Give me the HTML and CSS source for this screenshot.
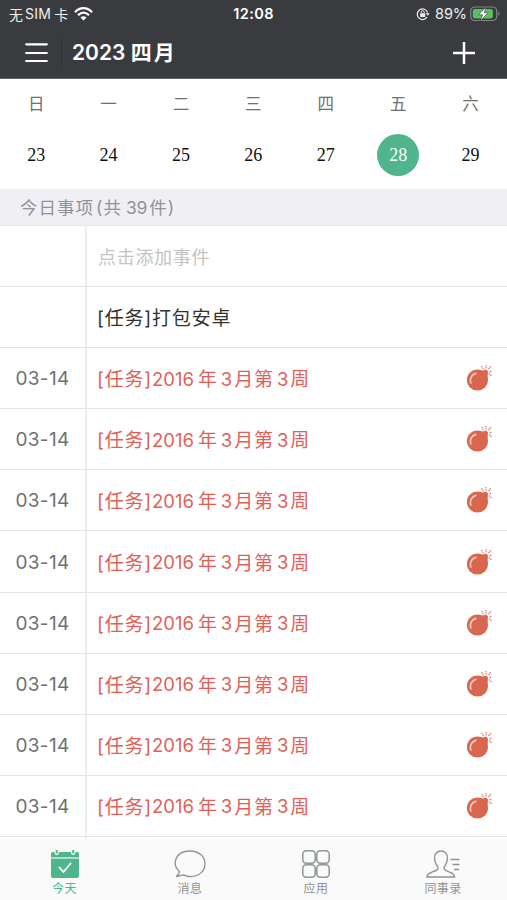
FILE: index.html
```
<!DOCTYPE html>
<html lang="zh-CN">
<head>
<meta charset="utf-8">
<title>今天</title>
<link rel="stylesheet" href="styles.css">
</head>
<body>
<svg class="defs" width="0" height="0">
  <symbol id="bomb" viewBox="0 0 28 28">
    <circle cx="12.5" cy="16" r="10.6" fill="#d9674f"/>
    <path d="M16 7l5-1.500 2 2-.5 6z" fill="#d9674f"/>
    <path d="M5.800 19c-1.400-4.500.8-8.500 5-9.600" fill="none" stroke="#f7c9b9" stroke-width="1.700" stroke-linecap="round"/>
    <path d="M18.500 5l-2-3M21 4.500V1M23.500 5l2.500-3M24.500 7.500h2.500M24 9.500l2.500 2.500" fill="none" stroke="#dd8675" stroke-width="1.300" stroke-dasharray="1.600 .6"/>
  </symbol>
</svg>
<div class="app">
  <header>
    <div class="status">
      <div class="carrier"><span>无</span><span class="sim">SIM</span><span>卡</span>
        <svg class="wifi" width="19" height="14" viewBox="0 0 19 14"><g fill="none" stroke="#fff" stroke-width="2.300"><path d="M1 5.200C6-.2 13-.2 18 5.200"/><path d="M4 8.300c3.500-3.400 7.500-3.400 11 0"/></g><path d="M9.500 13.500L6.500 10.500q3-2.400 6 0z" fill="#fff"/></svg>
      </div>
      <time>12:08</time>
      <div class="power">
        <svg width="14" height="14" viewBox="0 0 14 14"><path d="M11 10.200A5.300 5.300 0 1 1 11.600 5.500" fill="none" stroke="#eee" stroke-width="1.300"/><path d="M9.600 6.200h4L11.800 8.800z" fill="#eee"/><rect x="4.200" y="6.300" width="5" height="3.700" rx=".5" fill="#eee"/><path d="M5.200 6.500V5.200a1.500 1.500 0 0 1 3 0v1.300" fill="none" stroke="#eee"/></svg>
        <span>89%</span>
        <svg width="31" height="16" viewBox="0 0 31 16"><rect x=".7" y="1" width="26" height="13.500" rx="4" fill="none" stroke="#85868a" stroke-width="1.200"/><rect x="2.800" y="3" width="20" height="9.500" rx="2.300" fill="#58c35c"/><path d="M28.300 5.500q2.500 2.200 0 4.500z" fill="#85868a"/><path d="M16.300.8L8.500 8.800h4.200L10.200 15l8-8.300H14z" fill="#fff" stroke="#3a3b3f" stroke-width=".6"/></svg>
      </div>
    </div>
    <div class="nav">
      <svg class="menu" width="23" height="22" viewBox="0 0 23 22"><path d="M1.200 2.300h20.600M1.200 11h20.600M1.200 19h20.600" stroke="#fff" stroke-width="2.200" stroke-linecap="round"/></svg>
      <h1>2023 <span>四月</span></h1>
      <svg class="plus" width="22" height="22" viewBox="0 0 22 22"><path d="M11 .8v20.400M.8 11h20.400" stroke="#fff" stroke-width="2.500" stroke-linecap="round"/></svg>
    </div>
  </header>
  <section class="calendar">
    <div class="week"><span>日</span><span>一</span><span>二</span><span>三</span><span>四</span><span>五</span><span>六</span></div>
    <div class="days"><span>23</span><span>24</span><span>25</span><span>26</span><span>27</span><span class="active">28</span><span>29</span></div>
  </section>
  <h2>今日事项<span class="count">(共<b>39</b>件)</span></h2>
  <main id="tasks">
    <div class="row"><div class="date"></div><div class="title hint">点击添加事件</div></div>
    <div class="row"><div class="date"></div><div class="title">[任务]打包安卓</div></div>
  </main>
  <footer>
    <div class="tab on">
      <svg width="28" height="28" viewBox="0 0 28 28"><path d="M0 8.500h28V26q0 2-2 2H2q-2 0-2-2z" fill="#4fb58e"/><path d="M0 7V4q0-2 2-2h1.500q0 3 2.200 3T8 2h12q0 3 2.200 3t2.300-3H26q2 0 2 2v3z" fill="#4fb58e"/><path d="M0 7h28v1.500H0z" fill="#b5dfce"/><path d="M5.700 0v3.500M22.200 0v3.500" stroke="#4fb58e" stroke-width="2"/><path d="M8 17l4.500 5L20 13" fill="none" stroke="#fff" stroke-width="1.800"/></svg>
      <span>今天</span>
    </div>
    <div class="tab">
      <svg width="32" height="28" viewBox="0 0 32 28"><path d="M5.500 21.700C-2.500 14.500.8 1 16 1c8.500 0 15 5.400 15 12.700 0 10.500-12 15.800-21.500 11.200L2 26.500q3-1.500 3.500-4.800z" fill="none" stroke="#8f9291" stroke-width="1.300"/></svg>
      <span>消息</span>
    </div>
    <div class="tab">
      <svg width="28" height="28" viewBox="0 0 28 28"><g fill="none" stroke="#8f9897" stroke-width="1.500"><rect x=".8" y=".8" width="12.400" height="12.400" rx="3.500"/><rect x="14.800" y=".8" width="12.400" height="12.400" rx="3.500"/><rect x=".8" y="14.800" width="12.400" height="12.400" rx="3.500"/><rect x="14.800" y="14.800" width="12.400" height="12.400" rx="3.500"/></g></svg>
      <span>应用</span>
    </div>
    <div class="tab">
      <svg width="34" height="28" viewBox="0 0 34 28"><path d="M12 17.500C10.500 15 8.500 12.500 8.500 8.500 8.500 4 11 1 15 1s6.500 3 6.500 7.500c0 4-2 6.500-3.500 9-.7 2 1.500 3 5 4.300 4 1.300 5.500 2.400 5.500 5.200H1c0-2.800 1.500-3.900 5.500-5.200 4-1.300 6.200-2.300 5.500-4.300z" fill="none" stroke="#8f9291" stroke-width="1.400"/><path d="M24.500 9.500h9M26.500 14.500h7M28 19.500h5" stroke="#8f9291" stroke-width="1.500"/></svg>
      <span>同事录</span>
    </div>
  </footer>
</div>
<script src="tasks.js"></script>
</body>
</html>
```
FILE: styles.css
```
* { box-sizing: border-box; }
body { margin: 0; font-family: Inter, "Noto Sans CJK SC", sans-serif; background: #fff; }
svg { display: block; flex: none; }
.defs { position: absolute; }
.app { width: 507px; height: 900px; overflow: hidden; display: flex; flex-direction: column; }
header { height: 79px; flex: none; background: #3a3b3f; color: #fff; border-bottom: 1px solid #636467; }
.status { height: 27px; display: grid; grid-template-columns: 1fr auto 1fr; align-items: center; font-size: 14px; color: #eee; }
.carrier { display: flex; align-items: center; padding-left: 9px; }
.sim { margin: 0 3px 0 2px; letter-spacing: .3px; }
.wifi { margin-left: 6px; }
time { font-weight: 600; font-size: 14.500px; letter-spacing: .4px; color: #fff; }
.power { display: flex; justify-content: flex-end; align-items: center; padding-right: 6px; }
.power span { margin: 0 3px 0 5px; font-size: 14.500px; letter-spacing: -.1px; }
.nav { height: 51px; display: flex; align-items: center; padding: 0 32px 0 25px; }
h1 { height: 30px; line-height: 30px; margin: 0 auto 0 13px; padding-left: 10px; border-left: 1px solid #303135; font-size: 21px; font-weight: 600; white-space: nowrap; }
h1 span { letter-spacing: 2px; }
.calendar { height: 110px; flex: none; }
.week, .days { display: grid; grid-template-columns: repeat(7, 72.400px); justify-items: center; align-items: center; }
.week { height: 48px; font-size: 16.500px; color: #707070; }
.days { height: 55px; font: 18px "Liberation Serif", serif; color: #111; }
.days span { width: 42px; height: 42px; line-height: 43px; text-align: center; border-radius: 50%; }
.days .active { background: #50b48d; color: #fff; }
h2 { flex: none; height: 37px; line-height: 37px; margin: 0; padding-left: 20px; background: #efeff4; border-bottom: 1px solid #e9e9ec; color: #939397; font-size: 17.500px; font-weight: 400; letter-spacing: 1px; }
h2 b { font-weight: 400; margin: 0 2px 0 4px; letter-spacing: -.2px; }
.count { margin-left: 2px; }
main { height: 613px; flex: none; overflow: hidden; }
.row { height: 61.100px; display: flex; border-bottom: 1px solid #e4e4e6; }
.date { width: 87px; flex: none; border-right: 2px solid #ededf0; display: flex; align-items: center; justify-content: center; padding-top: 1px; font-size: 19px; letter-spacing: .3px; color: #707073; }
.title { flex: 1; display: flex; align-items: center; padding-left: 10px; padding-bottom: 1px; font-size: 19px; letter-spacing: .8px; color: #333; }
.hint { font-size: 18px; color: #c3c3c3; padding-left: 11px; letter-spacing: .7px; }
.late { color: #e25f58; }
.late b { font-weight: 400; font-size: 18.500px; letter-spacing: 0; margin: 2px 2px 0 3px; }
.late b:first-of-type { margin-left: 0; margin-right: 4px; }
.bomb { margin: 1px 14px 0 auto; align-self: center; }
footer { flex: 1; display: grid; grid-template-columns: 129px 122px 130px 124px; background: #fafafa; padding-top: 11px; }
.tab { display: flex; flex-direction: column; align-items: center; color: #8f9291; font-size: 12px; line-height: 18px; gap: 2px; letter-spacing: .4px; }
.on { color: #4fb58e; }
```
FILE: tasks.js
```
const list = document.getElementById('tasks');
for (let i = 0; i < 9; i++) {
  const row = document.createElement('div');
  row.className = 'row';
  row.innerHTML = i < 8
    ? '<div class="date">03-14</div><div class="title late">[任务]<b>2016</b>年<b>3</b>月第<b>3</b>周<svg class="bomb" width="28" height="28"><use href="#bomb"/></svg></div>'
    : '<div class="date"></div><div class="title"></div>';
  list.append(row);
}
```
